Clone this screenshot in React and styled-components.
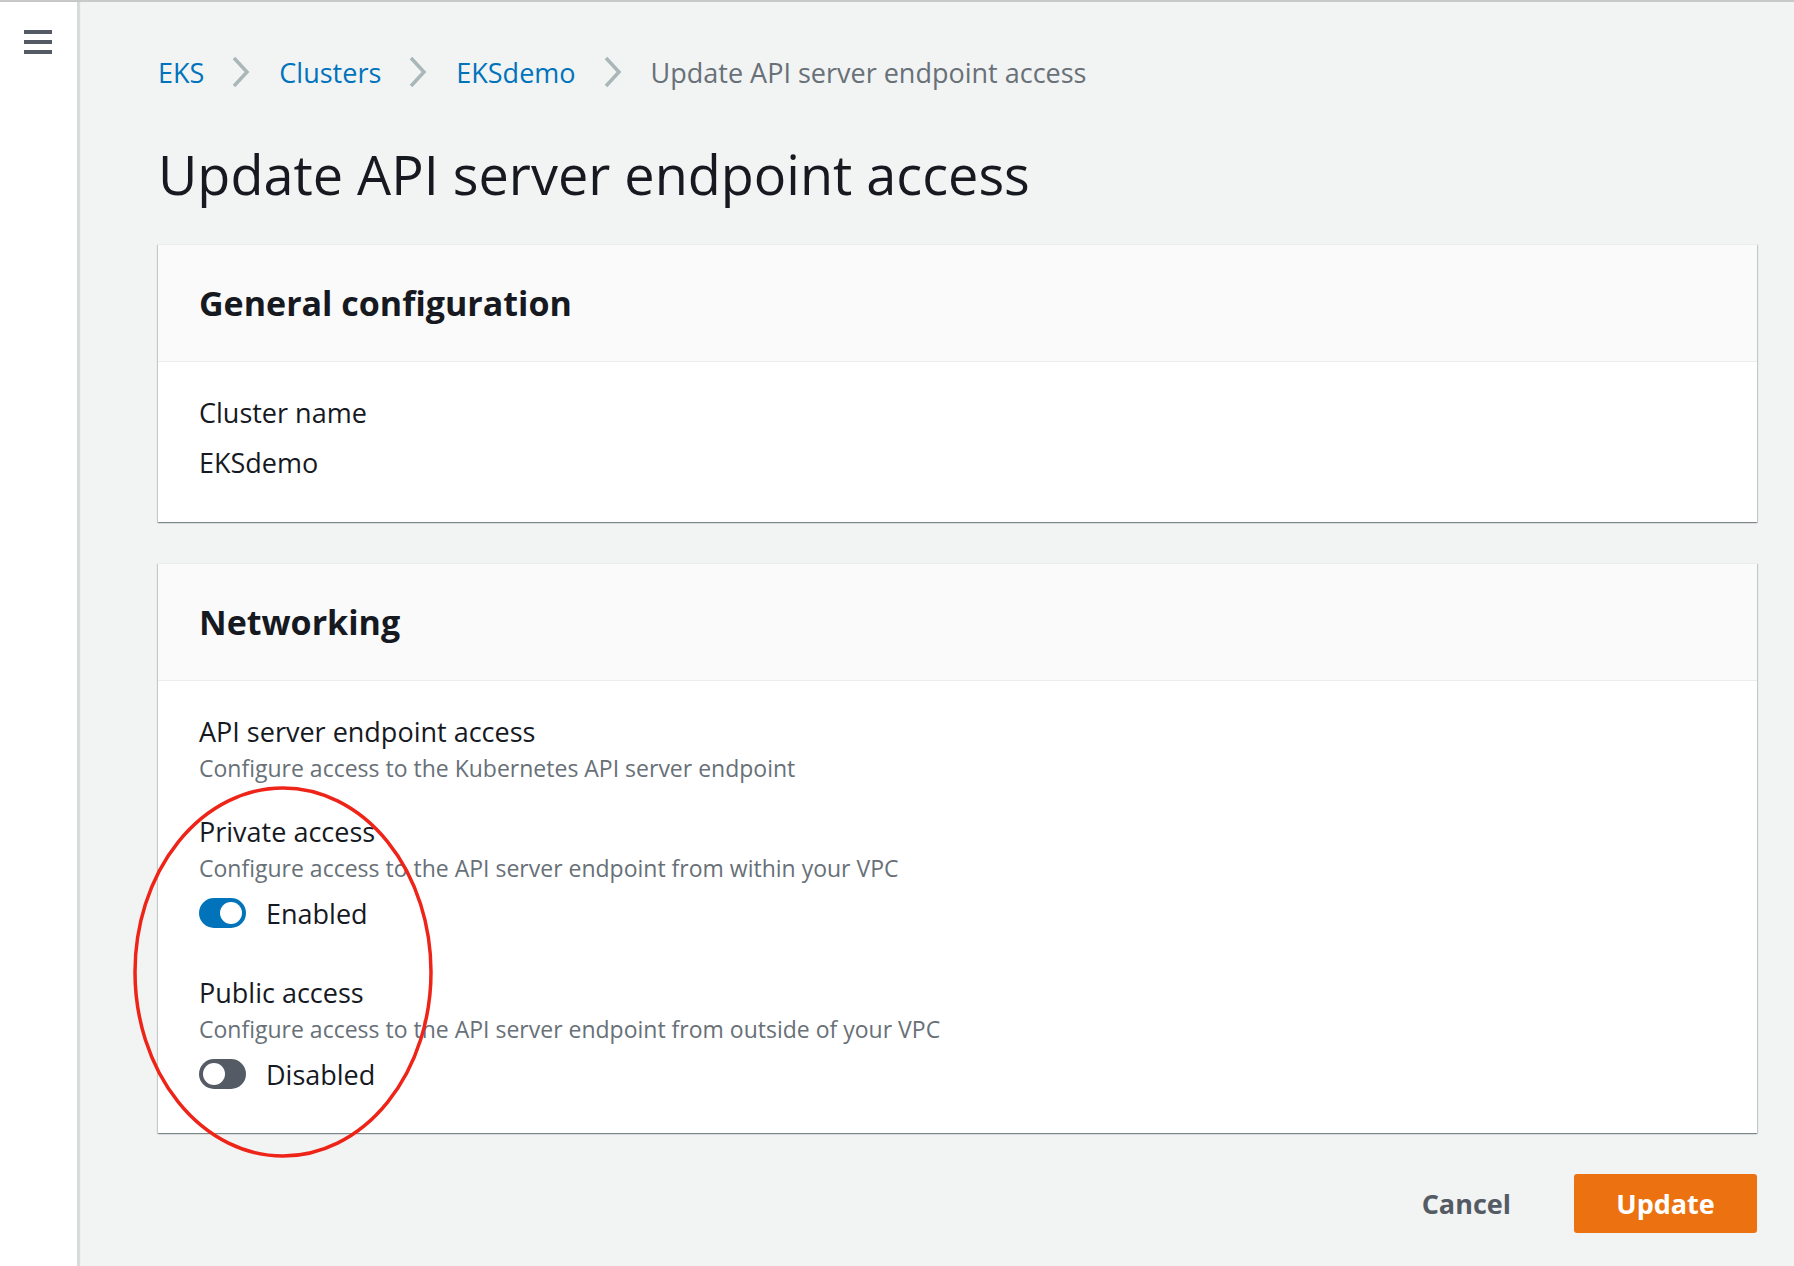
import styled, { createGlobalStyle } from "styled-components";

const GlobalStyle = createGlobalStyle`
    html, body {
        margin: 0;
        padding: 0;
        background: #f2f3f3;
        font-family: "Open Sans", "Noto Sans", sans-serif;
        color: #16191f;
    }
`;

const App = () => {
    return (
        <>
            <GlobalStyle />
            <Page>
                <SideBar>
                    <Burger>
                        <span />
                        <span />
                        <span />
                    </Burger>
                </SideBar>

                <Main>
                    <Breadcrumbs>
                        <Crumb href="/#">EKS</Crumb>
                        <Chevron />
                        <Crumb href="/#">Clusters</Crumb>
                        <Chevron />
                        <Crumb href="/#">EKSdemo</Crumb>
                        <Chevron />
                        <Current>Update API server endpoint access</Current>
                    </Breadcrumbs>

                    <Title>Update API server endpoint access</Title>

                    <Card>
                        <CardHeader>General configuration</CardHeader>
                        <CardBody>
                            <Label>Cluster name</Label>
                            <Value>EKSdemo</Value>
                        </CardBody>
                    </Card>

                    <Card>
                        <CardHeader>Networking</CardHeader>
                        <CardBody>
                            <Label>API server endpoint access</Label>
                            <Description>Configure access to the Kubernetes API server endpoint</Description>

                            <Field>
                                <Label>Private access</Label>
                                <Description>Configure access to the API server endpoint from within your VPC</Description>
                                <ToggleRow>
                                    <Toggle on />
                                    Enabled
                                </ToggleRow>
                            </Field>

                            <Field gap={44}>
                                <Label>Public access</Label>
                                <Description>Configure access to the API server endpoint from outside of your VPC</Description>
                                <ToggleRow>
                                    <Toggle />
                                    Disabled
                                </ToggleRow>
                            </Field>
                        </CardBody>
                    </Card>

                    <Actions>
                        <CancelButton>Cancel</CancelButton>
                        <PrimaryButton>Update</PrimaryButton>
                    </Actions>
                </Main>

                {/* annotation drawn over the page */}
                <Annotation width="320" height="390" viewBox="0 0 320 390">
                    <ellipse cx="150" cy="187" rx="148" ry="184" fill="none" stroke="#ee2419" strokeWidth="3.5" />
                </Annotation>
            </Page>
        </>
    );
};

const Chevron = () => (
    <ChevronSvg width="20" height="32" viewBox="0 0 20 32">
        <polyline points="3,2 16,16 3,30" fill="none" stroke="#aab7b8" strokeWidth="3.5" />
    </ChevronSvg>
);

const Page = styled.div`
    position: relative;
    display: flex;
    min-height: 1266px;
    border-top: 2px solid #c8caca;
    box-sizing: border-box;
`;

const SideBar = styled.div`
    width: 77px;
    flex-shrink: 0;
    background: #fff;
    border-right: 2px solid #d5dbdb;
    box-shadow: 1px 0 1px rgba(0, 28, 36, 0.1);
`;

const Burger = styled.div`
    display: flex;
    flex-direction: column;
    gap: 6px;
    width: 28px;
    margin: 28px 0 0 24px;

    span {
        display: block;
        height: 4px;
        background: #545b64;
    }
`;

const Main = styled.div`
    flex: 1;
    padding: 52px 37px 0 79px;
`;

const Breadcrumbs = styled.nav`
    display: flex;
    align-items: center;
    height: 36px;
    font-size: 27px;
`;

const Crumb = styled.a`
    color: #0073bb;
    text-decoration: none;
`;

const Current = styled.span`
    color: #687078;
`;

const ChevronSvg = styled.svg`
    margin: 0 28px 0 27px;
`;

const Title = styled.h1`
    margin: 54px 0 40px;
    font-size: 54px;
    line-height: 60px;
    font-weight: 400;
    color: #16191f;
`;

const Card = styled.section`
    background: #fff;
    border-top: 1px solid #eaeded;
    box-shadow: 0 1px 1px 0 rgba(0, 28, 36, 0.3), 1px 1px 1px 0 rgba(0, 28, 36, 0.15),
        -1px 1px 1px 0 rgba(0, 28, 36, 0.15);
    margin-bottom: 41px;
`;

const CardHeader = styled.h2`
    margin: 0;
    height: 116px;
    display: flex;
    align-items: center;
    padding: 0 41px;
    background: #fafafa;
    border-bottom: 1px solid #eaeded;
    font-size: 34px;
    font-weight: 700;
    color: #16191f;
`;

const CardBody = styled.div`
    padding: 33px 41px 41px;
`;

const Label = styled.div`
    font-size: 27px;
    line-height: 36px;
    color: #16191f;
`;

const Value = styled.div`
    margin-top: 14px;
    font-size: 27px;
    line-height: 36px;
`;

const Description = styled.div`
    margin-top: 2px;
    font-size: 23px;
    line-height: 32px;
    color: #687078;
`;

const Field = styled.div`
    margin-top: ${props => props.gap || 30}px;
`;

const ToggleRow = styled.div`
    display: flex;
    align-items: center;
    gap: 20px;
    margin-top: 11px;
    height: 36px;
    font-size: 27px;
`;

const Toggle = styled.span`
    position: relative;
    width: 47px;
    height: 30px;
    border-radius: 15px;
    background: ${props => props.on ? "#0073bb" : "#545b64"};

    &::after {
        content: "";
        position: absolute;
        top: 4px;
        left: ${props => props.on ? "21px" : "4px"};
        width: 22px;
        height: 22px;
        border-radius: 50%;
        background: #fff;
    }
`;

const Actions = styled.div`
    display: flex;
    justify-content: flex-end;
    align-items: center;
    gap: 33px;
`;

const CancelButton = styled.button`
    border: none;
    background: none;
    padding: 0 30px;
    height: 59px;
    font-family: inherit;
    font-size: 27px;
    font-weight: 700;
    color: #545b64;
    cursor: pointer;
`;

const PrimaryButton = styled.button`
    width: 183px;
    height: 59px;
    border: none;
    border-radius: 3px;
    background: #ec7211;
    font-family: inherit;
    font-size: 27px;
    font-weight: 700;
    color: #fff;
    cursor: pointer;
`;

const Annotation = styled.svg`
    position: absolute;
    left: 133px;
    top: 783px;
    pointer-events: none;
`;

export default App;
